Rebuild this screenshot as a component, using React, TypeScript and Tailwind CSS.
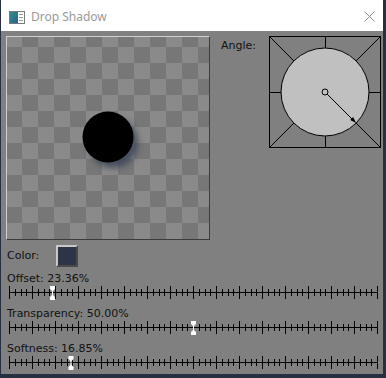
const ui = { fontFamily: '"DejaVu Sans", "Liberation Sans", sans-serif' };

function TitleIcon() {
  return (
    <svg width="16" height="13" viewBox="0 0 16 13">
      <defs>
        <linearGradient id="ti" x1="0" y1="0" x2="1" y2="1">
          <stop offset="0" stopColor="#2f8f86" />
          <stop offset="1" stopColor="#2a5f8f" />
        </linearGradient>
      </defs>
      <rect x="0.5" y="0.5" width="15" height="12" fill="#fff" stroke="#7a7a7a" />
      <rect x="1" y="1" width="8" height="11" fill="url(#ti)" />
      <line x1="10" y1="3.5" x2="14" y2="3.5" stroke="#9a9a9a" />
      <line x1="10" y1="6.5" x2="14" y2="6.5" stroke="#9a9a9a" />
      <line x1="10" y1="9.5" x2="14" y2="9.5" stroke="#9a9a9a" />
    </svg>
  );
}

function AngleDial() {
  const c = 55;
  const r = 44;
  const d = r / Math.SQRT2;
  const ex = c + d - 1;
  return (
    <svg width="110" height="110" viewBox="0 0 110 110" className="block">
      <line x1="0" y1="0" x2={c - d} y2={c - d} stroke="#000" />
      <line x1="110" y1="0" x2={c + d} y2={c - d} stroke="#000" />
      <line x1="0" y1="110" x2={c - d} y2={c + d} stroke="#000" />
      <line x1="110" y1="110" x2={c + d} y2={c + d} stroke="#000" />
      <line x1="55.5" y1="0" x2="55.5" y2="11" stroke="#000" />
      <line x1="55.5" y1="99" x2="55.5" y2="110" stroke="#000" />
      <line x1="0" y1="55.5" x2="11" y2="55.5" stroke="#000" />
      <line x1="99" y1="55.5" x2="110" y2="55.5" stroke="#000" />
      <circle cx={c} cy={c} r={r} fill="#c0c0c0" stroke="#000" />
      <circle cx={c} cy={c} r="3" fill="none" stroke="#000" />
      <line x1={c + 2} y1={c + 2} x2={ex} y2={ex} stroke="#000" />
      <polygon points={`${ex + 1},${ex + 1} ${ex - 5},${ex - 2} ${ex - 2},${ex - 5}`} fill="#000" />
    </svg>
  );
}

function Track({ thumb }: { thumb: number }) {
  const ticks = Array.from({ length: 65 }, (_, i) => i);
  return (
    <svg width="372" height="16" viewBox="0 0 372 16" className="block">
      <line x1="1" y1="7.5" x2="370" y2="7.5" stroke="#000" />
      {ticks.map((i) => {
        const x = Math.round(1 + i * 5.75) + 0.5;
        const major = i % 4 === 0;
        return (
          <line
            key={i}
            x1={x}
            x2={x}
            y1={major ? 1 : 4}
            y2={major ? 14 : 11}
            stroke="#000"
          />
        );
      })}
      <path
        transform={`translate(${thumb - 2.5} 1)`}
        d="M0 0H5V3L3 5V9L5 11V14H0V11L2 9V5L0 3Z"
        fill="#fff"
      />
    </svg>
  );
}

function Slider({ label, thumb }: { label: string; thumb: number }) {
  return (
    <div className="flex flex-col">
      <div className="h-[13px] leading-[13px] pl-[6px] text-[11px] text-[#111]">{label}</div>
      <div className="pl-[7px]">
        <Track thumb={thumb} />
      </div>
    </div>
  );
}

export default function App() {
  return (
    <div className="w-[386px] h-[378px] bg-[#263040] overflow-hidden" style={ui}>
      <div className="ml-[1px] w-[382px] h-[374px] bg-[#808080] flex flex-col">
        <div className="h-[31px] bg-white flex items-center relative">
          <div className="ml-[8px] mt-[3px]">
            <TitleIcon />
          </div>
          <span
            className="ml-[6px] mt-[2px] text-[12px] text-[#999]"
            style={{ fontFamily: '"Noto Sans", "Open Sans", sans-serif' }}
          >
            Drop Shadow
          </span>
          <svg width="11" height="11" viewBox="0 0 11 11" className="ml-auto mr-[8px] mt-[1px]">
            <line x1="0.5" y1="0.5" x2="10.5" y2="10.5" stroke="#8a8a8a" />
            <line x1="10.5" y1="0.5" x2="0.5" y2="10.5" stroke="#8a8a8a" />
          </svg>
        </div>

        <div className="flex items-start mt-[5px] ml-[5px]">
          <div className="w-[204px] h-[204px] border border-t-[#cfcfcf] border-l-[#cfcfcf] border-r-[#3c3c3c] border-b-[#3c3c3c] bg-[image:conic-gradient(#8a8a8a_25%,#777777_0_50%,#8a8a8a_0_75%,#777777_0)] bg-[length:32px_32px] bg-[position:15px_-6px]">
            <svg width="202" height="202" viewBox="0 0 202 202" className="block">
              <defs>
                <filter id="sh" x="-50%" y="-50%" width="200%" height="200%">
                  <feGaussianBlur stdDeviation="3" />
                </filter>
              </defs>
              <circle cx="106" cy="106" r="25" fill="#3a4456" opacity="0.85" filter="url(#sh)" />
              <circle cx="101" cy="100" r="25.5" fill="#000" />
            </svg>
          </div>
          <div className="ml-[11px] mt-[2px] text-[11px] text-[#111] leading-[15px]">Angle:</div>
          <div className="ml-auto mr-[2px] border border-black">
            <AngleDial />
          </div>
        </div>

        <div className="flex items-center mt-[5px] ml-[6px]">
          <span className="text-[11px] text-[#111] w-[49px]">Color:</span>
          <div className="w-[22px] h-[22px] border-2 border-t-[#c8c8c8] border-l-[#c8c8c8] border-r-[#4a4a4a] border-b-[#4a4a4a]">
            <div className="w-full h-full bg-[#2c3446]" />
          </div>
        </div>

        <div className="mt-[5px] flex flex-col gap-[6px]">
          <Slider label="Offset: 23.36%" thumb={44.5} />
          <Slider label="Transparency: 50.00%" thumb={185.5} />
          <Slider label="Softness: 16.85%" thumb={63} />
        </div>
      </div>
    </div>
  );
}
